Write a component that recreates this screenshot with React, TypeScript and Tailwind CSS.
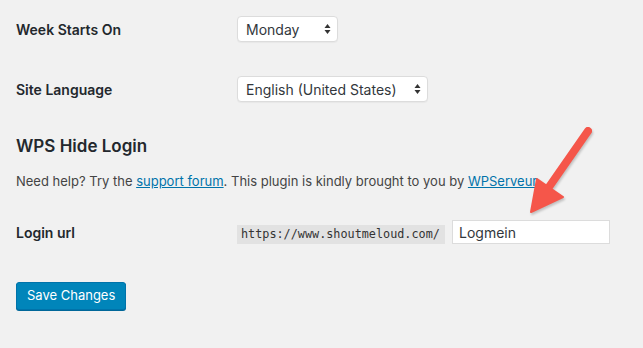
import React from 'react';

const font = { fontFamily: 'Inter, "Open Sans", sans-serif' };

function Updown() {
  return (
    <svg width="7" height="12" viewBox="0 0 7 12" className="shrink-0">
      <path d="M3.5 1 L6.5 5 L0.5 5 Z" fill="#333" />
      <path d="M3.5 11 L6.5 7 L0.5 7 Z" fill="#333" />
    </svg>
  );
}

function FakeSelect({ value, width }: { value: string; width: string }) {
  return (
    <div
      className={`${width} h-[26px] bg-white border border-[#dcdcdc] rounded-[4px] flex items-center justify-between pl-[8px] pr-[6px] text-[14px] text-[#32373c] shadow-[0_1px_1px_rgba(0,0,0,0.04)]`}
    >
      <span>{value}</span>
      <Updown />
    </div>
  );
}

export default function App() {
  return (
    <div className="relative w-[643px] h-[348px] bg-[#f1f1f1] overflow-hidden text-[#23282d]" style={font}>
      <div className="px-4 pt-[16px]">
        <div className="flex items-center h-[26px]">
          <div className="w-[221px] text-[14px] font-semibold">Week Starts On</div>
          <FakeSelect value="Monday" width="w-[101px]" />
        </div>

        <div className="flex items-center h-[26px] mt-[34px]">
          <div className="w-[221px] text-[14px] font-semibold">Site Language</div>
          <FakeSelect value="English (United States)" width="w-[191px]" />
        </div>

        <h2 className="text-[17px] font-semibold mt-[33px] leading-[22px]">WPS Hide Login</h2>

        <p className="text-[13px] text-[#444] mt-[14px] leading-[20px]">
          Need help? Try the{' '}
          <a href="#" className="text-[#0073aa] underline">
            support forum
          </a>
          . This plugin is kindly brought to you by{' '}
          <a href="#" className="text-[#0073aa] underline">
            WPServeur
          </a>
        </p>

        <div className="flex items-center h-[24px] mt-[29px]">
          <div className="w-[221px] text-[14px] font-semibold">Login url</div>
          <code
            className="bg-[#e2e2e2] text-[#333] text-[11.8px] px-[4px] w-[208px] h-[19px] flex items-center mt-[5px] overflow-hidden whitespace-nowrap"
            style={{ fontFamily: '"DejaVu Sans Mono", monospace' }}
          >
            https://www.shoutmeloud.com/
          </code>
          <div className="ml-[7px] w-[158px] h-[24px] bg-white border border-[#dcdcdc] flex items-center px-[6px] text-[14px] text-[#32373c]">
            Logmein
          </div>
        </div>

        <button className="mt-[38px] h-[28px] px-[10px] bg-[#0085ba] border border-[#0073aa] rounded-[3px] text-white text-[13px] shadow-[0_1px_0_#006799]">
          Save Changes
        </button>
      </div>

      <svg className="absolute inset-0 pointer-events-none" width="643" height="348" viewBox="0 0 643 348">
        <g style={{ filter: 'drop-shadow(1px 2px 1px rgba(0,0,0,0.2))' }}>
          <line x1="588" y1="131" x2="549" y2="187" stroke="#f5564a" strokeWidth="8" strokeLinecap="round" />
          <path d="M531 212 L537 179 L563 197 Z" fill="#f5564a" stroke="#f5564a" strokeWidth="2" strokeLinejoin="round" />
        </g>
      </svg>
    </div>
  );
}
